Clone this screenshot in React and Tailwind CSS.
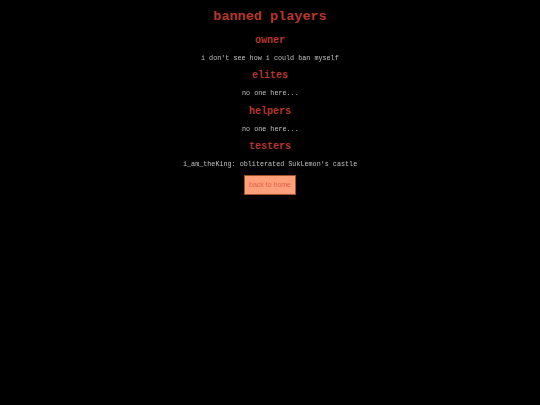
export default function App() {
  const sections = [
    { title: 'owner', lines: ["i don't see how i could ban myself"] },
    { title: 'elites', lines: ['no one here...'] },
    { title: 'helpers', lines: ['no one here...'] },
    { title: 'testers', lines: ["i_am_theKing: obliterated SukLemon's castle"] },
  ]

  return (
    <div className="min-h-screen w-full bg-black flex flex-col items-center pt-[7px] font-['Liberation_Mono',monospace]">
      <h1 className="text-[13.5px] leading-[20px] font-bold text-[#b8362a]">banned players</h1>
      {sections.map((s) => (
        <section key={s.title} className="flex flex-col items-center">
          <h2 className="mt-[7.5px] text-[10px] leading-[12px] font-bold text-[#b8362a]">{s.title}</h2>
          {s.lines.map((line) => (
            <p key={line} className="mt-[6px] text-[6.75px] leading-[10px] text-[#c0c0c0] whitespace-pre will-change-transform">
              {line}
            </p>
          ))}
        </section>
      ))}
      <button className="mt-[6px] w-[52px] h-[20px] bg-[#ffa07a] border border-[#a0522d] text-[7px] text-[#e0604a] font-['Liberation_Sans',Arial,sans-serif] will-change-transform">
        back to home
      </button>
    </div>
  )
}
